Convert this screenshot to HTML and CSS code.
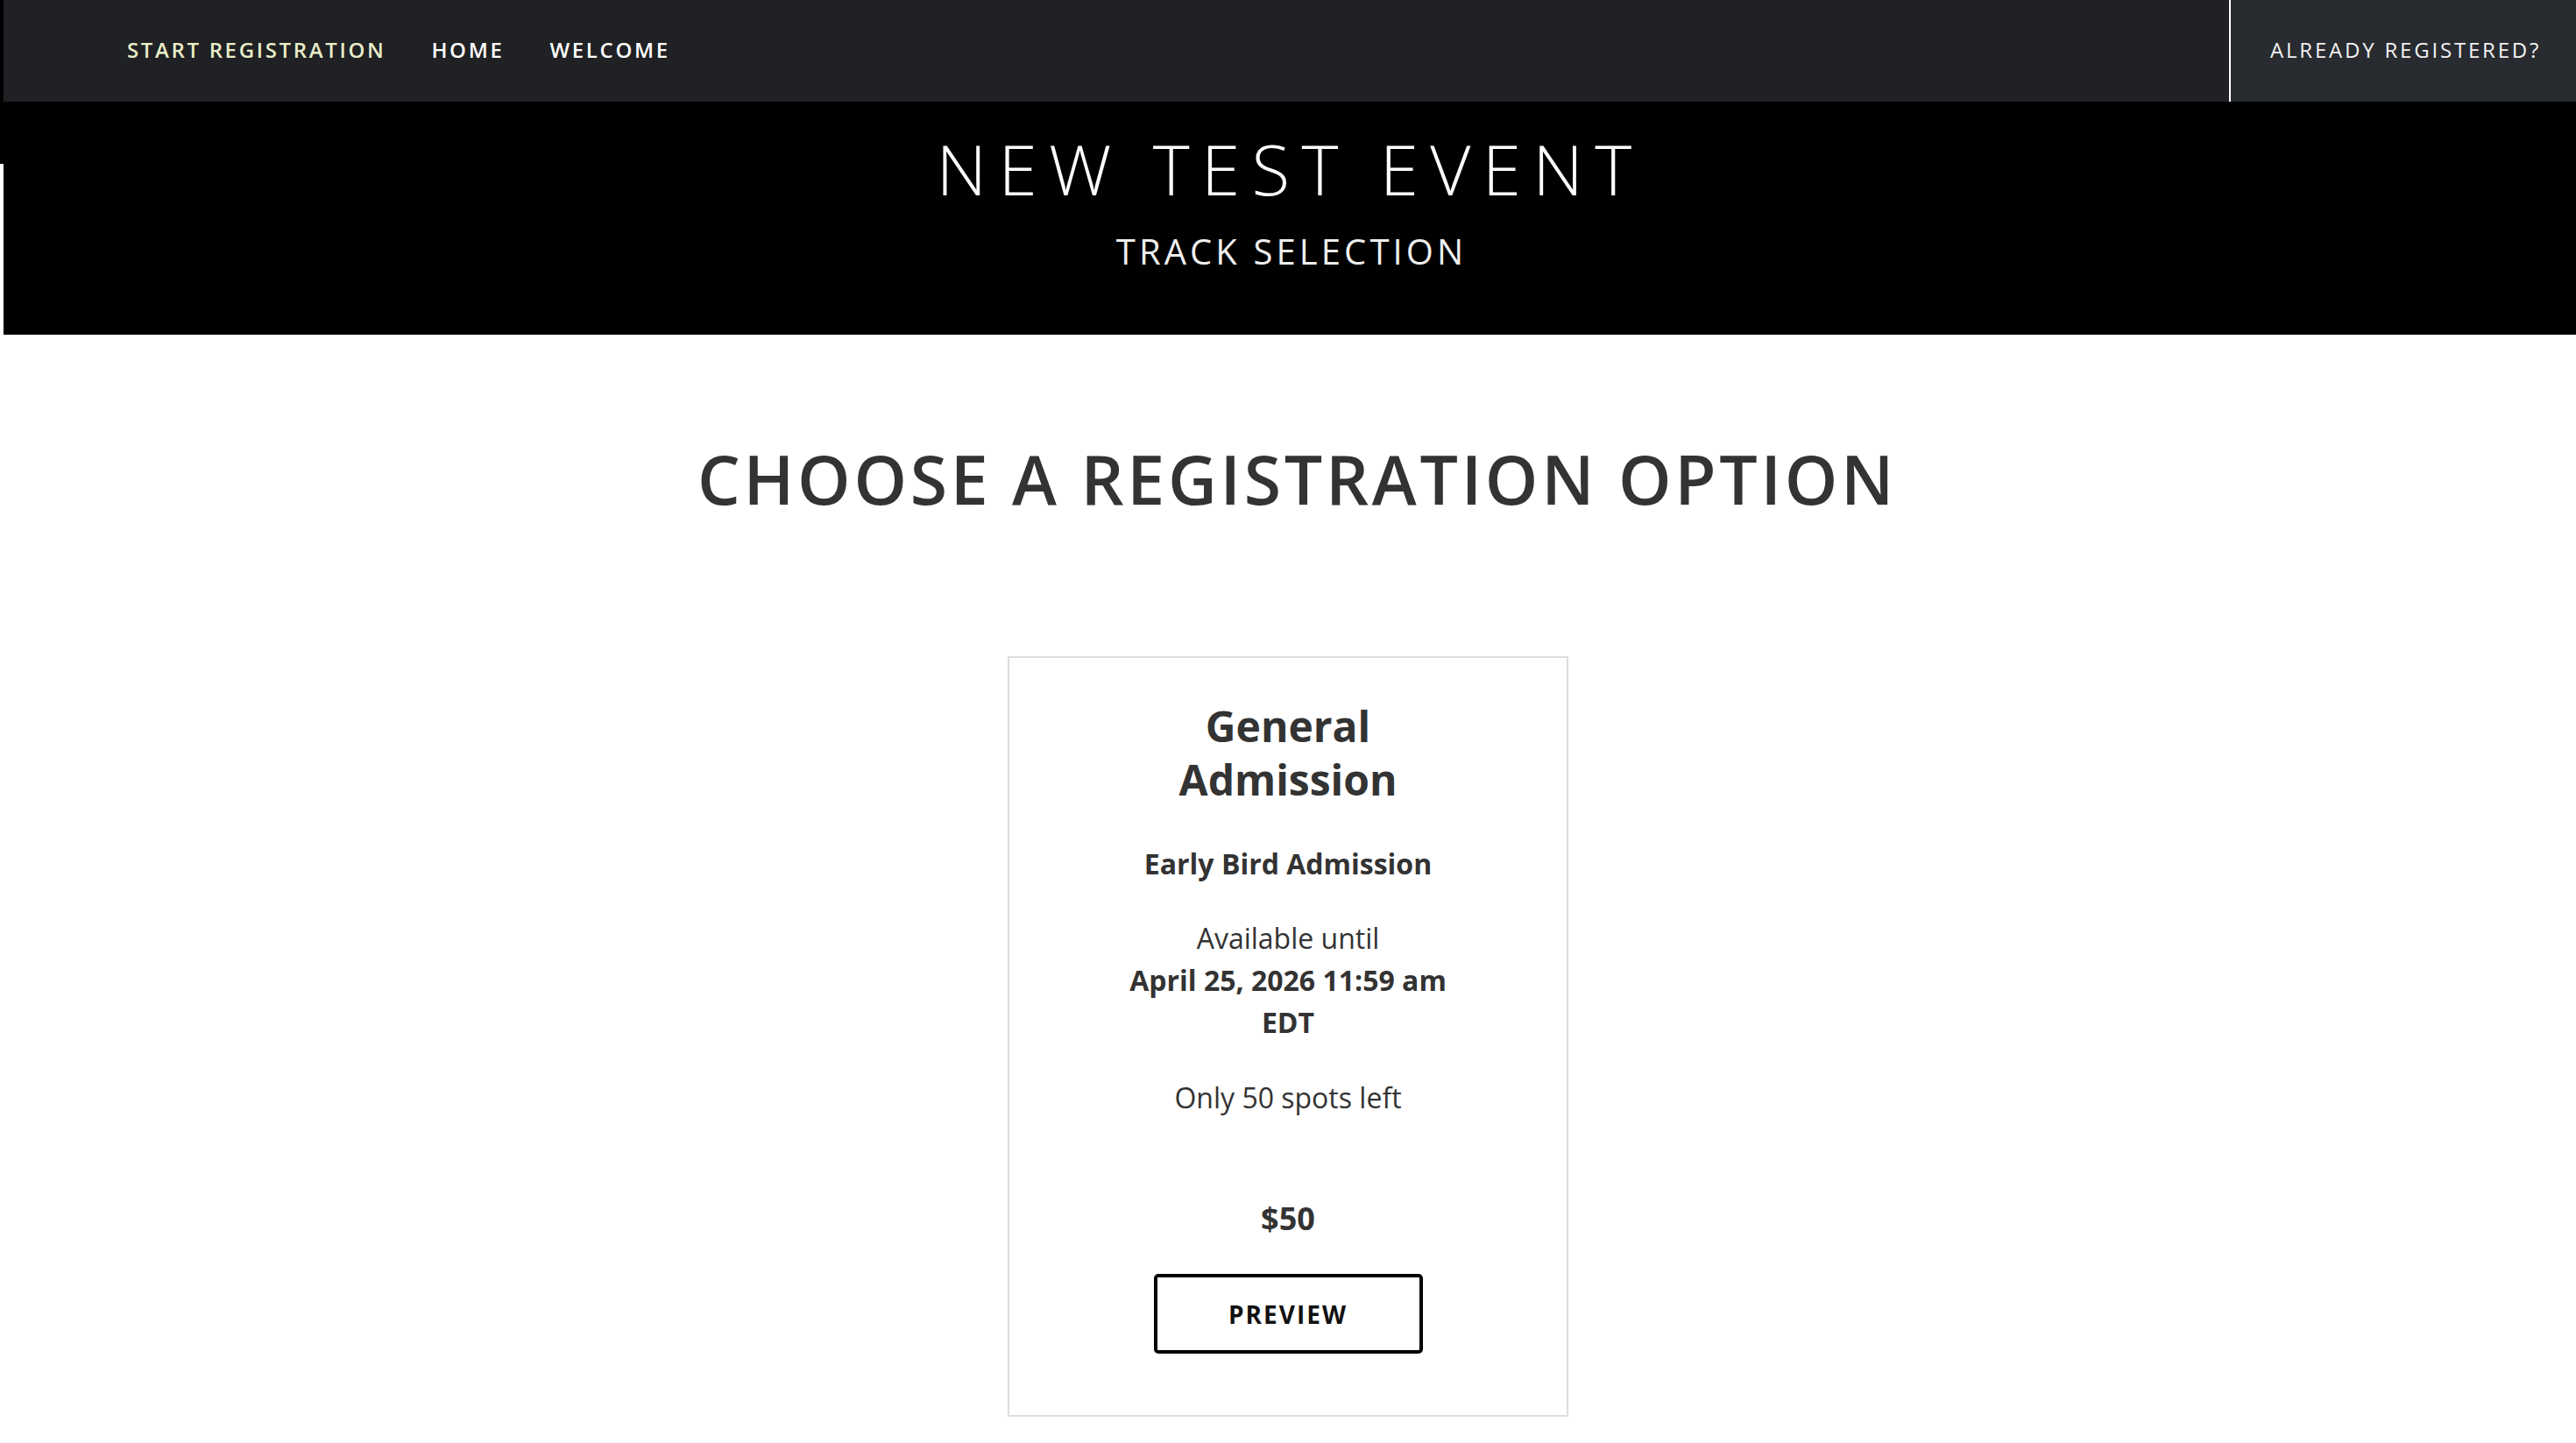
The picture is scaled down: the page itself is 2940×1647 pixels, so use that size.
FILE: index.html
```html
<!DOCTYPE html>
<html lang="en">
<head>
<meta charset="utf-8">
<title>New Test Event - Track Selection</title>
<link rel="stylesheet" href="styles.css">
</head>
<body>
<div class="edge"></div>
<header class="topbar">
  <nav class="main-nav">
    <a class="nav-link active" href="#">Start Registration</a>
    <a class="nav-link" href="#">Home</a>
    <a class="nav-link" href="#">Welcome</a>
  </nav>
  <div class="account">
    <a class="account-link" href="#">Already Registered?</a>
  </div>
</header>
<section class="hero">
  <h1 class="hero-title">New Test Event</h1>
  <p class="hero-sub">Track Selection</p>
</section>
<main class="content">
  <h2 class="section-title">Choose a Registration Option</h2>
  <div class="cards">
    <div class="card">
      <h3 class="card-title">General Admission</h3>
      <p class="card-type">Early Bird Admission</p>
      <p class="card-text card-text-first">Available until<br><strong>April 25, 2026 11:59 am EDT</strong></p>
      <p class="card-text">Only 50 spots left</p>
      <p class="card-price">$50</p>
      <a class="btn" href="#">Preview</a>
    </div>
  </div>
</main>
</body>
</html>
```
FILE: styles.css
```css
* { box-sizing: border-box; }
html, body { margin: 0; padding: 0; }
body {
  background: #fff;
  font-family: "Open Sans", "Noto Sans", sans-serif;
  color: #333;
  position: relative;
}
a { text-decoration: none; }
.edge {
  position: absolute;
  left: 0;
  top: 0;
  width: 4px;
  height: 187px;
  background: #000;
}
.topbar {
  margin-left: 4px;
  height: 116px;
  background: #1f2124;
  display: flex;
  justify-content: space-between;
}
.main-nav {
  display: flex;
  align-items: center;
  gap: 52px;
  padding-left: 141px;
  padding-bottom: 4px;
}
.nav-link {
  color: #fff;
  font-size: 24px;
  font-weight: 600;
  letter-spacing: 2.65px;
  text-transform: uppercase;
}
.nav-link.active { color: #e9edc8; }
.account {
  width: 396px;
  border-left: 2px solid #fff;
  background: #282b30;
  display: flex;
  align-items: center;
  padding-left: 45px;
  padding-bottom: 4px;
}
.account-link {
  color: #f2f2f2;
  font-size: 24px;
  font-weight: 400;
  letter-spacing: 2.8px;
  text-transform: uppercase;
}
.hero {
  margin-left: 4px;
  background: #000;
  height: 266px;
  padding-top: 28px;
  text-align: center;
}
.hero-title {
  margin: 0;
  color: #fff;
  font-size: 80px;
  font-weight: 300;
  line-height: 96px;
  letter-spacing: 13.3px;
  text-transform: uppercase;
}
.hero-sub {
  margin: 23px 0 0;
  padding-left: 4px;
  color: #eee;
  font-size: 40px;
  font-weight: 400;
  line-height: 48px;
  letter-spacing: 4.1px;
  text-transform: uppercase;
}
.content {
  text-align: center;
  padding-top: 119px;
}
.section-title {
  margin: 0;
  padding-left: 21px;
  font-size: 77px;
  font-weight: 600;
  line-height: 92px;
  letter-spacing: 3.7px;
  text-transform: uppercase;
  color: #333;
}
.cards {
  display: flex;
  justify-content: center;
  margin-top: 156px;
}
.card {
  width: 640px;
  border: 2px solid #ddd;
  padding: 47px 120px 70px;
  display: flex;
  flex-direction: column;
  align-items: center;
}
.card-title {
  margin: 0;
  font-size: 48px;
  font-weight: 700;
  line-height: 61px;
  color: #333;
}
.card-type {
  margin: 42px 0 0;
  font-size: 32px;
  font-weight: 700;
  line-height: 48px;
}
.card-text {
  margin: 38px 0 0;
  font-size: 32px;
  font-weight: 400;
  line-height: 48px;
}
.card-text-first { margin-top: 37px; }
.card-text strong { font-weight: 700; }
.card-price {
  margin: 87px 0 0;
  font-size: 36px;
  font-weight: 700;
  line-height: 54px;
}
.btn {
  margin-top: 36px;
  width: 307px;
  height: 91px;
  border: 4px solid #000;
  border-radius: 5px;
  display: flex;
  align-items: center;
  justify-content: center;
  color: #111;
  font-size: 28px;
  font-weight: 700;
  letter-spacing: 2px;
  text-transform: uppercase;
}
```
